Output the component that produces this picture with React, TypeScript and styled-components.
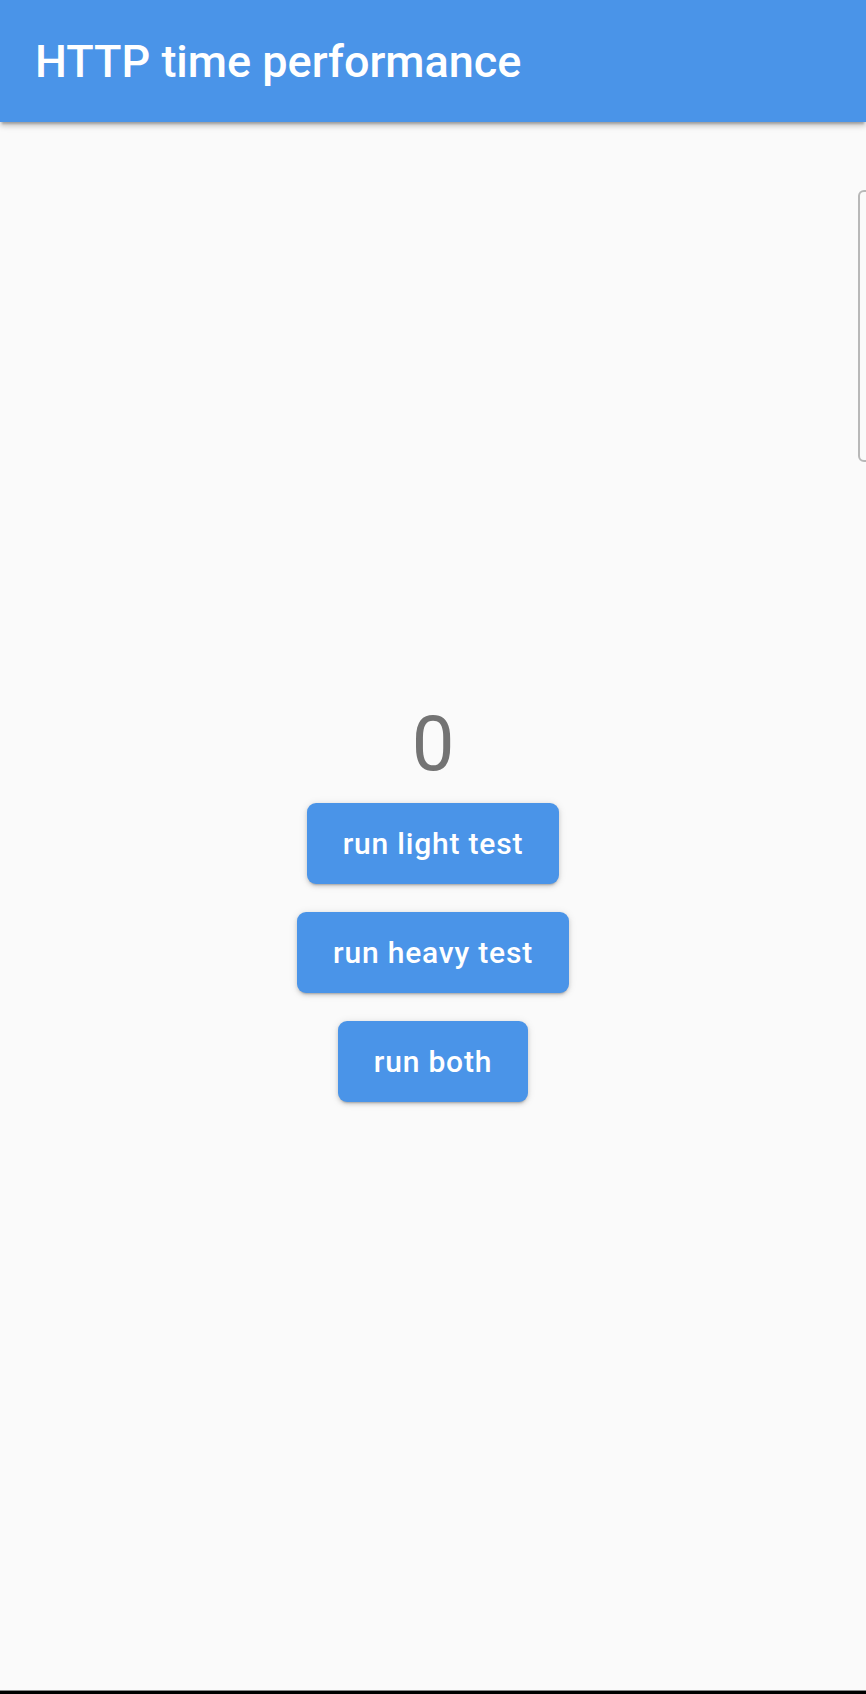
import React, { useState } from "react";
import styled, { createGlobalStyle } from "styled-components";

const GlobalStyle = createGlobalStyle`
  html, body {
    margin: 0;
    padding: 0;
    background: #fafafa;
  }
  body {
    font-family: Roboto, "Noto Sans", sans-serif;
    overflow: hidden;
  }
`;

function App() {
  const [count, setCount] = useState<number>(0);

  const runLight = () => setCount((c) => c + 1);
  const runHeavy = () => setCount((c) => c + 1);
  const runBoth = () => setCount((c) => c + 2);

  return (
    <Screen>
      <GlobalStyle />
      <AppBar>
        <Title>HTTP time performance</Title>
      </AppBar>
      <Body>
        <Counter>{count}</Counter>
        <RaisedButton onClick={runLight}>run light test</RaisedButton>
        <RaisedButton onClick={runHeavy}>run heavy test</RaisedButton>
        <RaisedButton onClick={runBoth}>run both</RaisedButton>
      </Body>
      <EdgeHandle />
      <NavEdge />
    </Screen>
  );
}

export default App;

const Screen = styled.div`
  position: relative;
  display: flex;
  flex-direction: column;
  width: 866px;
  height: 1694px;
  overflow: hidden;
  background: #fafafa;
`;

const AppBar = styled.header`
  position: relative;
  z-index: 2;
  display: flex;
  align-items: center;
  height: 122px;
  padding: 0 35px;
  background: #4a94e8;
  box-shadow: 0 4px 5px rgba(0, 0, 0, 0.14), 0 2px 9px rgba(0, 0, 0, 0.12),
    0 4px 2px -2px rgba(0, 0, 0, 0.2);
`;

const Title = styled.h1`
  margin: 0;
  color: #ffffff;
  font-family: Roboto, sans-serif;
  font-size: 45px;
  font-weight: 500;
  letter-spacing: 0;
`;

const Body = styled.main`
  flex: 1;
  display: flex;
  flex-direction: column;
  align-items: center;
  justify-content: center;
`;

const Counter = styled.div`
  color: #737373;
  font-family: Roboto, sans-serif;
  font-size: 76px;
  font-weight: 400;
  line-height: 89px;
`;

const RaisedButton = styled.button`
  height: 81px;
  margin: 14px 0;
  padding: 0 36px;
  border: none;
  border-radius: 9px;
  background: #4a94e8;
  color: #ffffff;
  font-family: Roboto, sans-serif;
  font-size: 30px;
  font-weight: 500;
  letter-spacing: 0.8px;
  cursor: pointer;
  box-shadow: 0 3px 2px -2px rgba(0, 0, 0, 0.2), 0 2px 4px rgba(0, 0, 0, 0.14),
    0 1px 8px rgba(0, 0, 0, 0.1);
`;

const EdgeHandle = styled.div`
  position: absolute;
  top: 190px;
  left: 858px;
  width: 30px;
  height: 272px;
  box-sizing: border-box;
  border: 2px solid #b8b8b8;
  border-radius: 6px;
`;

const NavEdge = styled.div`
  position: absolute;
  left: 0;
  right: 0;
  bottom: 0;
  height: 3px;
  background: #000000;
  border-top: 1px solid #8a8a8a;
`;
